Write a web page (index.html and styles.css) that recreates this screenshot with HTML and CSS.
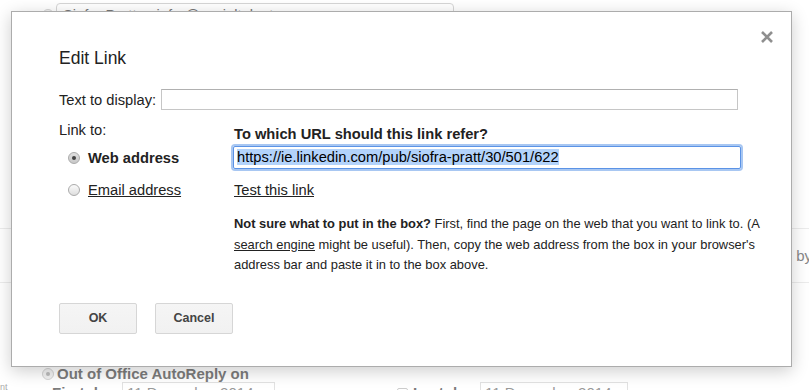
FILE: index.html
```html
<!DOCTYPE html>
<html lang="en">
<head>
  <meta charset="UTF-8">
  <title>Edit Link</title>
  <link rel="stylesheet" href="styles.css">
</head>
<body>

<!-- settings page behind the dialog -->
<div class="page">
  <div class="from-row">
    <span class="bg-radio on"></span>
    <div class="bg-select">
      <span>Siofra Pratt &lt;siofra@socialtalent.co&gt;</span>
      <span class="arrow">&#9650;</span>
    </div>
  </div>

  <div class="rule first"></div>
  <div class="bg-row"><span>Send replies by</span></div>
  <div class="rule"></div>

  <div class="ooo-row">
    <span class="bg-radio on"></span>
    <span class="ooo-label">Out of Office AutoReply on</span>
  </div>
  <div class="days-row">
    <span class="side-note">nt</span>
    <span class="day-label first-day">First day:</span>
    <span class="bg-input">11 December 2014</span>
    <span class="bg-check"></span>
    <span class="day-label last-day">Last day:</span>
    <span class="bg-input last">11 December 2014</span>
  </div>
</div>

<!-- Edit Link dialog -->
<div class="dialog">
  <svg class="close" width="12" height="12" viewBox="0 0 12 12">
    <path d="M1 1 L11 11 M11 1 L1 11" stroke="#8f8f8f" stroke-width="2.6" fill="none"/>
  </svg>

  <div class="title">Edit Link</div>

  <div class="display-row">
    <label>Text to display:</label>
    <div class="text-box"></div>
  </div>

  <div class="link-section">
    <div class="link-types">
      <div class="link-to">Link to:</div>
      <div class="type-row first">
        <span class="radio checked"></span>
        <span class="type-web">Web address</span>
      </div>
      <div class="type-row">
        <span class="radio"></span>
        <a class="type-mail">Email address</a>
      </div>
    </div>

    <div class="link-detail">
      <div class="question">To which URL should this link refer?</div>
      <div class="url-box"><span class="sel">https://ie.linkedin.com/pub/siofra-pratt/30/501/622</span></div>
      <a class="test-link">Test this link</a>
      <p class="help">
        <b>Not sure what to put in the box?</b> First, find the page on the web that you want to link to. (A
        <a>search engine</a> might be useful). Then, copy the web address from the box in your browser's
        address bar and paste it in to the box above.
      </p>
    </div>
  </div>

  <div class="buttons">
    <button>OK</button>
    <button>Cancel</button>
  </div>
</div>

</body>
</html>
```

FILE: styles.css
```css
html, body {
  margin: 0;
  height: 100%;
  overflow: hidden;
}
body {
  font-family: "Liberation Sans", Arial, sans-serif;
  font-size: 14.7px;
  color: #222;
  background: #fff;
  position: relative;
}

/* background page */
.page {
  padding-left: 42px;
  color: #8a8a8a;
}
.from-row {
  display: flex;
  align-items: center;
  margin-top: 3px;
  height: 24px;
}
.bg-radio {
  width: 10px;
  height: 10px;
  border-radius: 50%;
  border: 1px solid #d4d4d4;
  background: #f2f2f2;
  position: relative;
}
.bg-radio.on::after {
  content: "";
  position: absolute;
  left: 3px;
  top: 3px;
  width: 4px;
  height: 4px;
  border-radius: 50%;
  background: #bbb;
}
.bg-select {
  margin-left: 2px;
  width: 384px;
  height: 22px;
  border: 1px solid #d6d6d6;
  border-radius: 4px;
  display: flex;
  align-items: center;
  justify-content: space-between;
  padding: 0 6px;
  color: #777;
}
.bg-select .arrow {
  font-size: 8px;
  color: #888;
}
.rule {
  height: 1px;
  background: #ececec;
  margin-left: -42px;
}
.rule.first {
  margin-top: 201px;
}
.bg-row {
  height: 53px;
  display: flex;
  align-items: center;
  justify-content: flex-end;
  margin-right: -3px;
  color: #888;
  font-size: 15px;
  white-space: nowrap;
}
.ooo-row {
  margin-top: 83px;
  display: flex;
  align-items: center;
  gap: 3px;
  height: 15px;
}
.ooo-label {
  font-weight: bold;
  font-size: 15px;
  color: #7c7c7c;
}
.days-row {
  display: flex;
  align-items: flex-start;
  margin-top: 0;
  padding-left: 10px;
  position: relative;
}
.side-note {
  position: absolute;
  left: -42px;
  top: 1px;
  font-size: 9px;
  color: #aaa;
}
.day-label {
  font-weight: bold;
  font-size: 15px;
  line-height: 15px;
  color: #7c7c7c;
  padding-top: 4px;
  white-space: nowrap;
}
.first-day {
  width: 70px;
}
.last-day {
  width: 67px;
  margin-left: 5px;
}
.bg-input {
  width: 153px;
  height: 24px;
  margin-top: 1px;
  border: 1px solid #e2e2e2;
  padding: 2px 4px 0;
  line-height: 15px;
  color: #999;
  font-size: 15px;
  box-sizing: border-box;
  white-space: nowrap;
}
.bg-input.last {
  width: 148px;
}
.bg-check {
  width: 9px;
  height: 9px;
  border: 1px solid #ccc;
  border-radius: 2px;
  margin: 7px 0 0 122px;
}

/* dialog */
.dialog {
  position: absolute;
  left: 11px;
  top: 11px;
  width: 781px;
  height: 356px;
  box-sizing: border-box;
  background: #fff;
  border: 1px solid #acacac;
  box-shadow: 0 4px 16px rgba(0, 0, 0, 0.2);
  padding: 36px 0 0 47px;
}
.close {
  position: absolute;
  top: 19px;
  right: 18px;
}
.title {
  font-size: 17.5px;
  line-height: 20px;
  color: #222;
}
.display-row {
  display: flex;
  align-items: center;
  margin-top: 21px;
}
.text-box {
  margin-left: 5px;
  width: 577px;
  height: 21px;
  box-sizing: border-box;
  border: 1px solid #c6c6c6;
  border-top-color: #b0b0b0;
}

.link-section {
  display: grid;
  grid-template-columns: 175px 560px;
  margin-top: 11px;
}
.link-to {
  line-height: 18px;
}
.type-row {
  display: flex;
  align-items: center;
  height: 20px;
  margin-top: 12px;
  padding-left: 9px;
}
.type-row.first {
  margin-top: 9px;
}
.radio {
  width: 10px;
  height: 10px;
  border-radius: 50%;
  border: 1px solid #ababab;
  background: linear-gradient(#fbfbfb, #dedede);
  margin-right: 8px;
  position: relative;
}
.radio.checked {
  background: linear-gradient(#e0e0e0, #c8c8c8);
}
.radio.checked::after {
  content: "";
  position: absolute;
  left: 3px;
  top: 3px;
  width: 4px;
  height: 4px;
  border-radius: 50%;
  background: #444;
}
.type-web {
  font-weight: bold;
}
.type-mail, .test-link, .help a {
  color: #222;
  text-decoration: underline;
}

.link-detail {
  padding-top: 4px;
}
.question {
  font-weight: bold;
  line-height: 18px;
}
.url-box {
  margin-top: 3px;
  margin-left: -1px;
  width: 508px;
  height: 23px;
  box-sizing: border-box;
  border: 1px solid #5b93e6;
  border-radius: 2px;
  box-shadow: 0 0 0 2px #a8c7f2;
  padding: 1px 3px;
  line-height: 19px;
  color: #000;
  white-space: nowrap;
}
.url-box .sel {
  background: #b3d3fb;
}
.test-link {
  display: block;
  margin-top: 12px;
  line-height: 18px;
}
.help {
  margin: 15px 0 0;
  width: 554px;
  font-size: 12.9px;
  line-height: 20.5px;
  color: #222;
}

.buttons {
  display: flex;
  gap: 18px;
  margin-top: 27px;
}
.buttons button {
  width: 78px;
  height: 31px;
  font-family: inherit;
  font-size: 12.5px;
  font-weight: bold;
  color: #444;
  background: linear-gradient(#f5f5f5, #f1f1f1);
  border: 1px solid #d6d6d6;
  border-radius: 2px;
}
```
